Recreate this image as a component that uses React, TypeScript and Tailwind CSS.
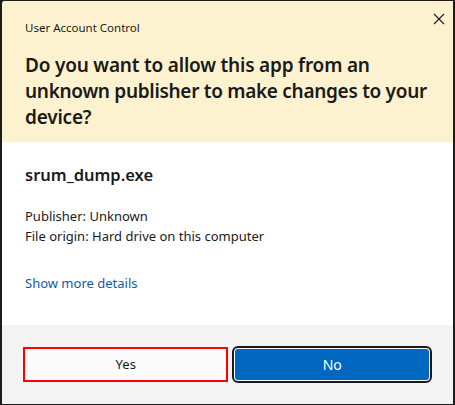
import React from "react";

export default function App() {
  return (
    <div className="w-[455px] h-[405px] bg-[#1c1c1c] p-0">
      <div className="w-full h-full flex flex-col border-l-2 border-r-2 border-t border-b border-[#1c1c1c] rounded-tl-[4px] overflow-hidden font-['Noto_Sans',sans-serif]">
        <div className="h-[141px] bg-[#fdf2d0] relative px-[23px] shrink-0">
          <div className="absolute right-[8px] top-[12px] w-[12px] h-[12px]">
            <svg viewBox="0 0 12 12" width="12" height="12">
              <path d="M1 1 L11 11 M11 1 L1 11" stroke="#1a1a1a" strokeWidth="1.1" />
            </svg>
          </div>
          <div className="pt-[18px] text-[11.5px] leading-[18px] text-[#1a1a1a]">User Account Control</div>
          <div className="mt-[15px] text-[19px] leading-[26px] font-semibold text-[#1a1a1a] tracking-[-0.2px] whitespace-nowrap">
            <div>Do you want to allow this app from an</div>
            <div className="tracking-[-0.3px]">unknown publisher to make changes to your</div>
            <div>device?</div>
          </div>
        </div>
        <div className="flex-1 bg-white px-[23px]">
          <div className="pt-[21px] text-[16.5px] leading-[24px] font-semibold text-[#1a1a1a]">srum_dump.exe</div>
          <div className="mt-[19px] text-[13px] leading-[20px] text-[#1a1a1a]">
            <div>Publisher: Unknown</div>
            <div>File origin: Hard drive on this computer</div>
          </div>
          <div className="mt-[27px] text-[13px] leading-[20px] text-[#0f5ca8]">Show more details</div>
        </div>
        <div className="h-[79px] bg-[#f3f3f3] shrink-0 flex items-start pt-[22px] px-[21px] gap-[4px]">
          <button className="w-[207px] h-[35px] border-2 border-[#ff0000] bg-[#fbfbfb] text-[13px] text-[#1a1a1a]">
            Yes
          </button>
          <div className="w-[201px] h-[37px] -mt-[1px] rounded-[6px] border-2 border-[#1a1a1a] p-[1px] bg-white">
            <button className="w-full h-full rounded-[3px] bg-[#0067c0] text-white text-[14px]">No</button>
          </div>
        </div>
      </div>
    </div>
  );
}
